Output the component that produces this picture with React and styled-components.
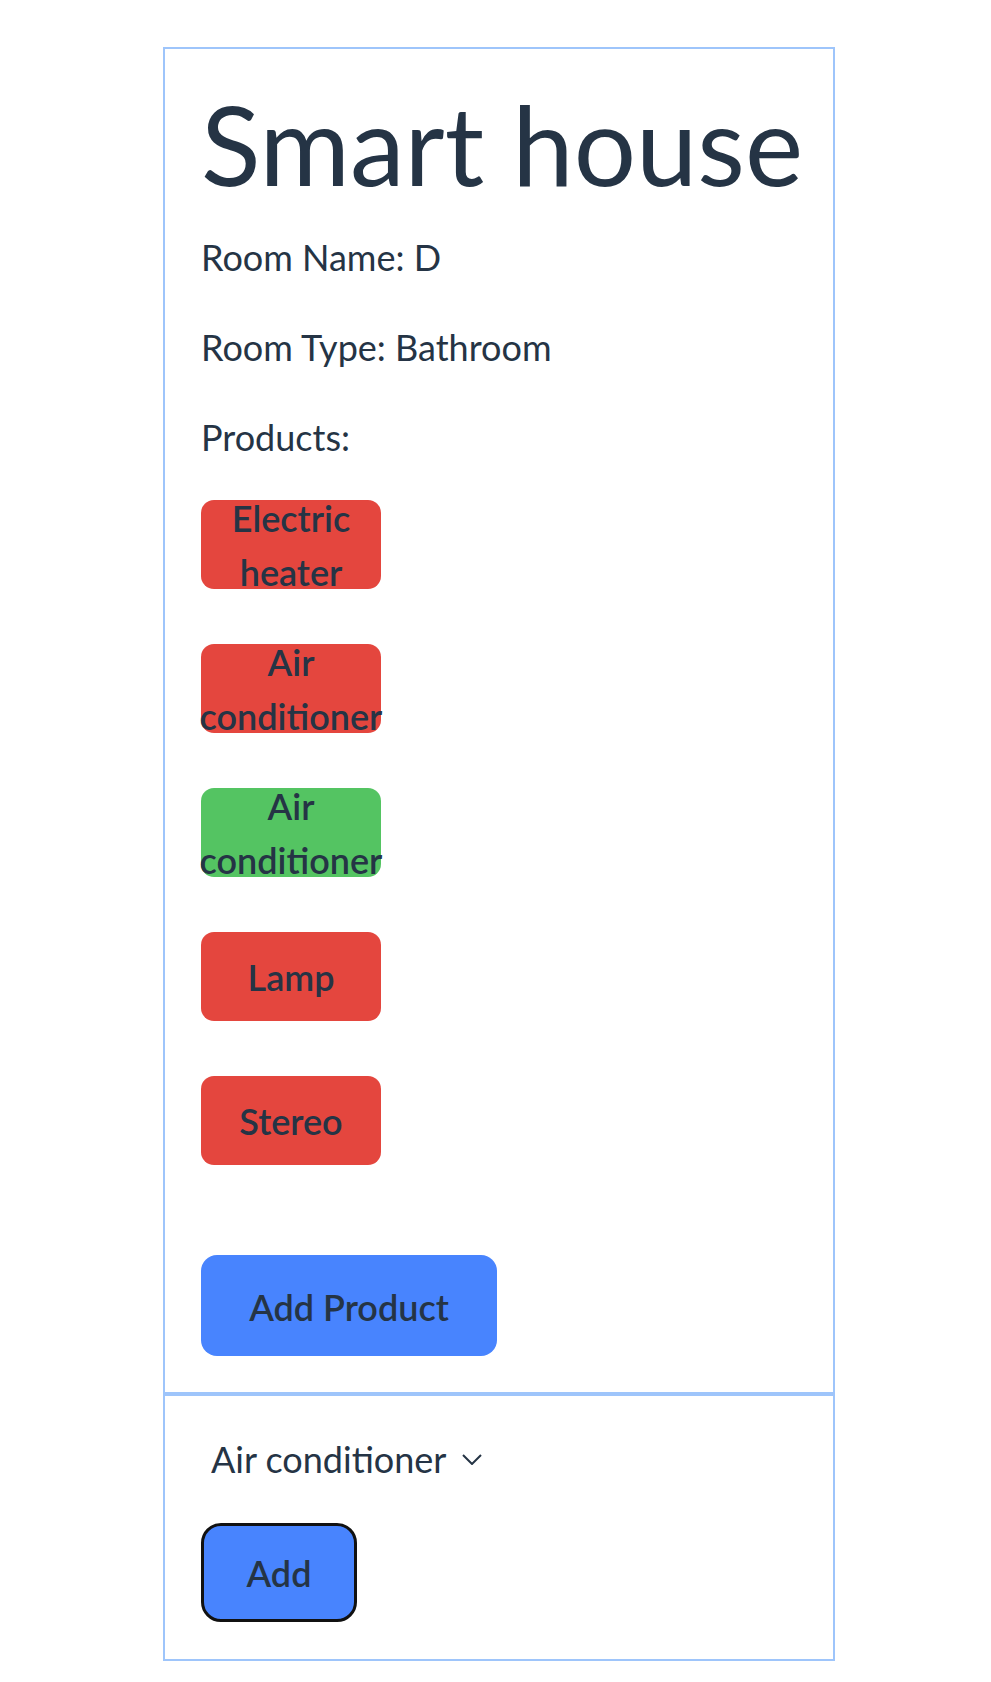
import React, { useState } from 'react'
import styled, { createGlobalStyle } from 'styled-components'

// room page of the smart house app

const GlobalStyle = createGlobalStyle`
  body {
    margin: 0;
    background: #ffffff;
    color: #253445;
    font-family: Lato, "Liberation Sans", sans-serif;
  }
`

const Page = styled.div`
  width: 672px;
  margin: 47px 0 0 163px;
`

const RoomBox = styled.div`
  border: 2px solid #9ec5fb;
  padding: 28px 36px 36px;
`

const AddBox = styled.div`
  border: 2px solid #9ec5fb;
  padding: 36px 36px 37px;
`

const Title = styled.h1`
  margin: 0 0 21px;
  font-size: 110px;
  font-weight: 400;
  line-height: 1.2;
  white-space: nowrap;
`

const Info = styled.p`
  margin: 0 0 36px;
  font-size: 36px;
  line-height: 54px;
`

const ProductList = styled.div`
  display: flex;
  flex-direction: column;
  align-items: flex-start;
  gap: 55px;
`

const ProductButton = styled.button`
  display: flex;
  align-items: center;
  justify-content: center;
  width: 180px;
  height: 89px;
  padding: 0;
  border: none;
  border-radius: 13px;
  background: ${(p) => (p.on ? '#54c462' : '#e4463e')};
  color: #253445;
  font-family: inherit;
  font-size: 36px;
  font-weight: 600;
  line-height: 54px;
  text-align: center;
`

const BlueButton = styled.button`
  display: flex;
  align-items: center;
  justify-content: center;
  background: #4884fe;
  color: #253445;
  font-family: inherit;
  font-size: 36px;
  font-weight: 600;
  line-height: 54px;
  cursor: pointer;
`

const AddProductButton = styled(BlueButton)`
  width: 296px;
  height: 101px;
  margin-top: 90px;
  padding: 3px 0 0;
  border: none;
  border-radius: 16px;
`

const AddButton = styled(BlueButton)`
  width: 156px;
  height: 99px;
  margin-top: 37px;
  padding: 0;
  border: 3px solid #111111;
  border-radius: 20px;
`

const SelectRow = styled.label`
  display: inline-flex;
  align-items: center;
  gap: 14px;
  padding-left: 10px;
`

const Select = styled.select`
  appearance: none;
  border: none;
  background: transparent;
  padding: 0;
  margin: 0;
  color: #253445;
  font-family: inherit;
  font-size: 36px;
  line-height: 54px;
  height: 54px;
  outline: none;
`

const Chevron = () => (
  <svg width="20" height="11" viewBox="0 0 20 11" fill="none">
    <path d="M1 1l9 9 9-9" stroke="#253445" strokeWidth="2" />
  </svg>
)

const products = [
  { name: 'Electric heater', on: false },
  { name: 'Air conditioner', on: false },
  { name: 'Air conditioner', on: true },
  { name: 'Lamp', on: false },
  { name: 'Stereo', on: false },
]

export default function App() {
  const [choice, setChoice] = useState('Air conditioner')

  return (
    <Page>
      <GlobalStyle />
      <RoomBox>
        <Title>Smart house</Title>
        <Info>Room Name: D</Info>
        <Info>Room Type: Bathroom</Info>
        <Info>Products:</Info>
        <ProductList>
          {products.map((p, i) => (
            <ProductButton key={i} on={p.on ? 1 : 0}>
              {p.name}
            </ProductButton>
          ))}
        </ProductList>
        <AddProductButton>Add Product</AddProductButton>
      </RoomBox>
      <AddBox>
        <SelectRow>
          <Select value={choice} onChange={(e) => setChoice(e.target.value)}>
            <option>Air conditioner</option>
            <option>Electric heater</option>
            <option>Lamp</option>
            <option>Stereo</option>
          </Select>
          <Chevron />
        </SelectRow>
        <AddButton>Add</AddButton>
      </AddBox>
    </Page>
  )
}
